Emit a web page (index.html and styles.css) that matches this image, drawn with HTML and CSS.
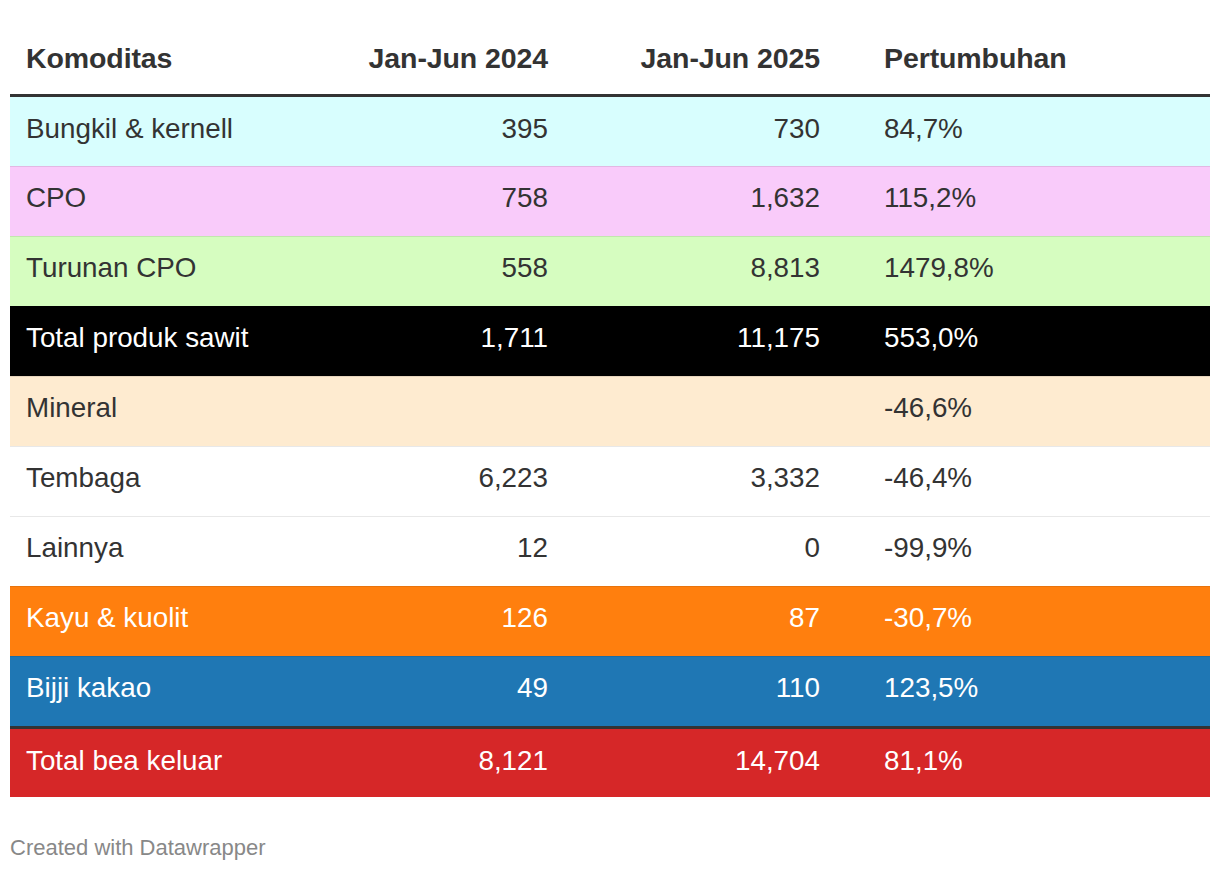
FILE: index.html
```html
<!DOCTYPE html>
<html lang="id">
<head>
<meta charset="utf-8">
<title>Bea keluar</title>
<link rel="stylesheet" href="styles.css">
</head>
<body>
<div class="chart">
  <div class="table">
    <div class="row head">
      <div class="cell">Komoditas</div>
      <div class="cell num">Jan-Jun 2024</div>
      <div class="cell num">Jan-Jun 2025</div>
      <div class="cell growth">Pertumbuhan</div>
    </div>
    <div class="row first cyan">
      <div class="cell">Bungkil &amp; kernell</div>
      <div class="cell num">395</div>
      <div class="cell num">730</div>
      <div class="cell growth">84,7%</div>
    </div>
    <div class="row pink">
      <div class="cell">CPO</div>
      <div class="cell num">758</div>
      <div class="cell num">1,632</div>
      <div class="cell growth">115,2%</div>
    </div>
    <div class="row green">
      <div class="cell">Turunan CPO</div>
      <div class="cell num">558</div>
      <div class="cell num">8,813</div>
      <div class="cell growth">1479,8%</div>
    </div>
    <div class="row black">
      <div class="cell">Total produk sawit</div>
      <div class="cell num">1,711</div>
      <div class="cell num">11,175</div>
      <div class="cell growth">553,0%</div>
    </div>
    <div class="row beige">
      <div class="cell">Mineral</div>
      <div class="cell num"></div>
      <div class="cell num"></div>
      <div class="cell growth">-46,6%</div>
    </div>
    <div class="row">
      <div class="cell">Tembaga</div>
      <div class="cell num">6,223</div>
      <div class="cell num">3,332</div>
      <div class="cell growth">-46,4%</div>
    </div>
    <div class="row">
      <div class="cell">Lainnya</div>
      <div class="cell num">12</div>
      <div class="cell num">0</div>
      <div class="cell growth">-99,9%</div>
    </div>
    <div class="row orange">
      <div class="cell">Kayu &amp; kuolit</div>
      <div class="cell num">126</div>
      <div class="cell num">87</div>
      <div class="cell growth">-30,7%</div>
    </div>
    <div class="row blue">
      <div class="cell">Bijji kakao</div>
      <div class="cell num">49</div>
      <div class="cell num">110</div>
      <div class="cell growth">123,5%</div>
    </div>
    <div class="row total red">
      <div class="cell">Total bea keluar</div>
      <div class="cell num">8,121</div>
      <div class="cell num">14,704</div>
      <div class="cell growth">81,1%</div>
    </div>
  </div>
  <div class="footer">Created with Datawrapper</div>
</div>
</body>
</html>
```

FILE: styles.css
```css
html, body {
  margin: 0;
  padding: 0;
  background: #fff;
}

body {
  font-family: "Liberation Sans", Arial, Helvetica, sans-serif;
  color: #333;
}

.chart {
  padding: 10px 10px 0 10px;
}

.table {
  display: flex;
  flex-direction: column;
}

.row {
  display: grid;
  grid-template-columns: 300px 254px 272px 1fr;
  border-top: 1px solid rgba(0, 0, 0, 0.09);
  font-size: 27.8px;
  line-height: 32px;
}

.cell {
  padding: 15px 16px 22px 16px;
  white-space: nowrap;
}

.num {
  text-align: right;
}

.growth {
  padding-left: 48px;
}

.row.head {
  border-top: none;
  border-bottom: 3px solid #333;
  font-weight: bold;
  font-size: 28.5px;
  letter-spacing: -0.1px;
}

.row.head .cell {
  padding-top: 32px;
  padding-bottom: 20px;
}

.row.first {
  border-top: none;
}

.row.first .cell {
  padding-top: 16px;
  padding-bottom: 21px;
}

.row.total {
  border-top: 3px solid #333;
}

.row.total .cell {
  padding-top: 16px;
  padding-bottom: 20px;
}

.cyan { background: #d8fefe; }
.pink { background: #f9cbfa; }
.green { background: #d6fdc0; }
.beige { background: #feebd0; }
.black { background: #000; color: #fff; }
.orange { background: #ff7f0e; color: #fff; }
.blue { background: #1f77b4; color: #fff; }
.red { background: #d62728; color: #fff; }

.footer {
  margin-top: 38px;
  font-size: 22px;
  line-height: 26px;
  color: #888;
}
```
